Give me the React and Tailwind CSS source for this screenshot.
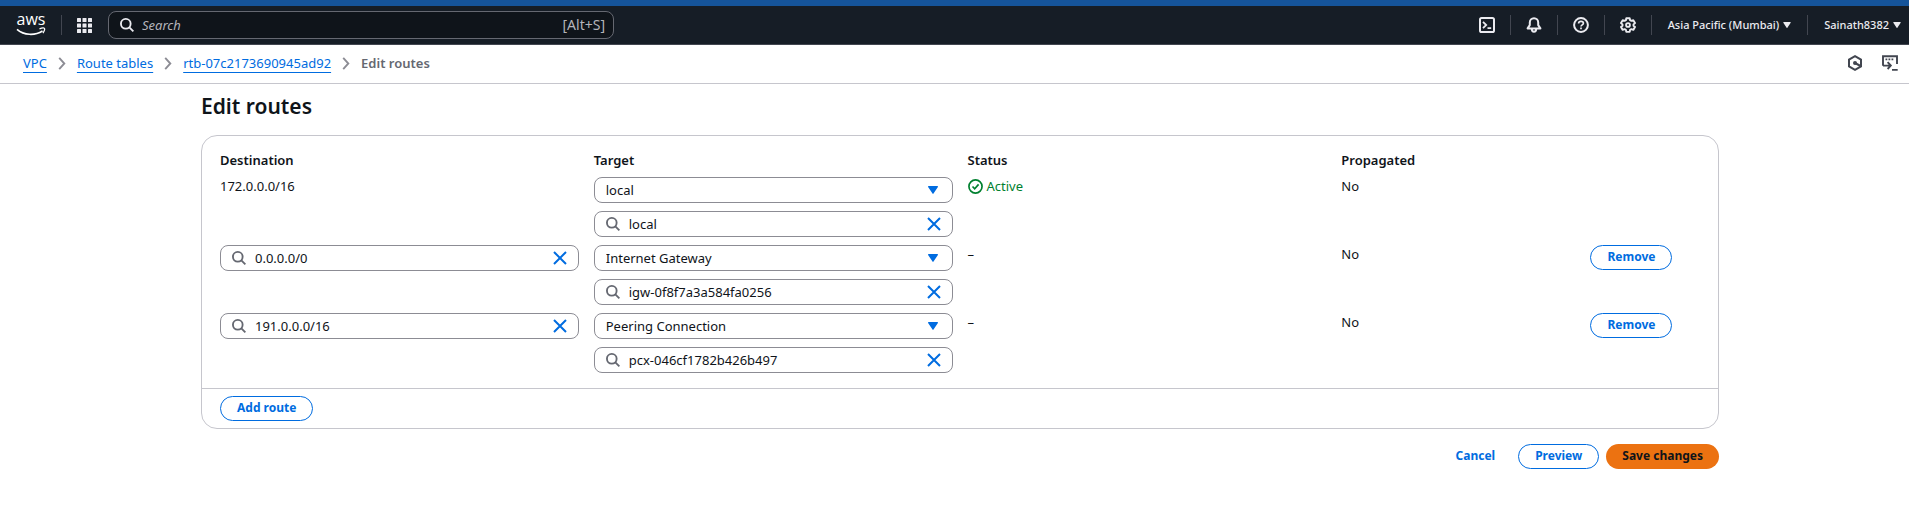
import React from "react";

const Divider = () => <span className="h-5 w-px shrink-0 bg-[#424650]" />;

const Caret = ({ className }) => (
  <svg viewBox="0 0 10 8" className={className} fill="currentColor" aria-hidden="true">
    <path d="M0.6 0h8.8c.5 0 .7.5.5.9L5.5 7.6c-.2.4-.8.4-1 0L.1.9C-.1.5.1 0 .6 0z" />
  </svg>
);

const SearchIcon = ({ className }) => (
  <svg viewBox="1 1 15 15" className={className} fill="none" stroke="currentColor" strokeWidth="2" aria-hidden="true">
    <circle cx="7.2" cy="7.2" r="5.2" />
    <path d="M11 11l4.300 4.300" />
  </svg>
);

const CloseIcon = () => (
  <svg viewBox="0 0 16 16" className="size-4" fill="none" stroke="currentColor" strokeWidth="2" aria-hidden="true">
    <path d="M2 2l12 12M14 2L2 14" />
  </svg>
);

const AwsLogo = () => (
  <a href="#home" aria-label="AWS" className="relative flex h-[28px] w-[30px] shrink-0 flex-col items-center text-white">
    <span className="font-['Open_Sans',sans-serif] text-base font-medium leading-4">aws</span>
    <svg viewBox="0 0 30 9" className="absolute bottom-[3px] left-0 h-[9px] w-[30px]" fill="none" stroke="currentColor" strokeWidth="1.6" aria-hidden="true">
      <path d="M1 2.400C8 8.600 19 8.800 26.500 4" />
      <path d="M23.500 1.800c2-.8 4.600-.9 5-.3.4.6-.2 3-1.600 4.600" strokeWidth="1.300" />
    </svg>
  </a>
);

const AppsIcon = () => (
  <svg viewBox="0 0 15 15" className="size-[15px]" fill="currentColor" aria-hidden="true">
    {[0, 5.5, 11].map((y) => [0, 5.5, 11].map((x) => <rect key={`${x}-${y}`} x={x} y={y} width="4" height="4" rx="0.5" />))}
  </svg>
);

const TerminalIcon = () => (
  <svg viewBox="0 0 16 16" className="size-4" fill="none" stroke="currentColor" strokeWidth="2" aria-hidden="true">
    <rect x="1" y="1" width="14" height="14" rx="1.6" />
    <path d="M4 4.800L7.200 8 4 11.200M8.500 11.200h3.700" strokeWidth="1.800" />
  </svg>
);

const BellIcon = () => (
  <svg viewBox="0 0 16 16" className="size-4" fill="none" stroke="currentColor" strokeWidth="2" strokeLinejoin="round" aria-hidden="true">
    <path d="M8 1.200c-2.500 0-4.200 1.900-4.200 4.300v2.600L1.600 11.400h12.800l-2.200-3.300V5.500C12.200 3.100 10.500 1.200 8 1.200z" />
    <path d="M5.800 11.800c0 1.700.9 2.900 2.200 2.900s2.200-1.200 2.200-2.900" />
  </svg>
);

const HelpIcon = () => (
  <svg viewBox="0 0 16 16" className="size-4" fill="none" stroke="currentColor" strokeWidth="2" aria-hidden="true">
    <circle cx="8" cy="8" r="6.900" />
    <path d="M5.600 6.400C5.600 5 6.600 4.300 8 4.300s2.400.8 2.400 1.900c0 1.600-2.400 1.700-2.400 3.300M8 10.600v1.700" strokeWidth="1.700" />
  </svg>
);

const GearIcon = () => (
  <svg viewBox="0 0 16 16" className="size-4" fill="none" stroke="currentColor" strokeWidth="1.900" strokeLinejoin="round" aria-hidden="true">
    <path d="M6.300 1.200h3.400l.4 2 1.300.7 1.900-.7 1.700 2.900L13.500 7.400v1.300l1.500 1.300-1.700 2.900-1.900-.7-1.300.7-.4 2H6.300l-.4-2-1.300-.7-1.900.7L1 10l1.500-1.300V7.400L1 6.100l1.700-2.900 1.900.7 1.300-.7z" />
    <circle cx="8" cy="8" r="1.900" />
  </svg>
);

const HexIcon = () => (
  <svg viewBox="0 0 16 16" className="size-4" fill="none" stroke="currentColor" strokeWidth="2" aria-hidden="true">
    <path d="M8 1.200l6 3.400v6.800l-6 3.400-6-3.400V4.600z" />
    <circle cx="8" cy="8" r="2" fill="currentColor" stroke="none" />
    <path d="M8 8l5.500 3" />
  </svg>
);

const ShellIcon = () => (
  <svg viewBox="0 0 16 16" className="size-4" fill="none" stroke="currentColor" strokeWidth="1.900" aria-hidden="true">
    <path d="M1 10.800V1.300h14V9" />
    <path d="M3.500 4.400h1.800M6.500 4.400h1.800M9.500 4.400h1.800" />
    <path d="M1 10.600h7.500M5.600 7.200l3.200 3.400-3.200 3.400M10 14.900h5.700" />
  </svg>
);

const Chevron = () => (
  <svg viewBox="0 0 8 14" className="h-[13px] w-2" fill="none" stroke="#8c8c94" strokeWidth="2" aria-hidden="true">
    <path d="M1 1l5.500 6L1 13" />
  </svg>
);

const SearchField = ({ label, value }) => (
  <div className="flex h-[26px] items-center rounded-lg border border-[#8c8c94] pl-[11px] pr-[10px]">
    <SearchIcon className="size-[14px] shrink-0 text-[#656871]" />
    <input aria-label={label} defaultValue={value} className="ml-[9px] min-w-0 flex-1 bg-transparent leading-5 outline-none" />
    <button type="button" aria-label={`Clear ${label}`} className="text-[#006ce0]">
      <CloseIcon />
    </button>
  </div>
);

const SelectField = ({ label, value }) => (
  <div className="relative">
    <select
      aria-label={label}
      defaultValue={value}
      className="block h-[26px] w-full appearance-none rounded-lg border border-[#8c8c94] bg-white pl-[11px] pr-8 leading-5 outline-none"
    >
      <option>local</option>
      <option>Internet Gateway</option>
      <option>Peering Connection</option>
    </select>
    <Caret className="pointer-events-none absolute right-[15px] top-[9px] h-2 w-[10px] text-[#006ce0]" />
  </div>
);

const OutlineButton = ({ children }) => (
  <button type="button" className="h-[25px] whitespace-nowrap rounded-full border border-[#006ce0] px-4 pb-px text-xs font-bold text-[#006ce0]">
    {children}
  </button>
);

const routes = [
  { destination: "172.0.0.0/16", type: "local", target: "local", status: "Active", fixed: true },
  { destination: "0.0.0.0/0", type: "Internet Gateway", target: "igw-0f8f7a3a584fa0256", status: "–" },
  { destination: "191.0.0.0/16", type: "Peering Connection", target: "pcx-046cf1782b426b497", status: "–" },
];

const tools = [
  ["CloudShell", TerminalIcon],
  ["Notifications", BellIcon],
  ["Help", HelpIcon],
  ["Settings", GearIcon],
];

export default function App() {
  return (
    <div className="bg-white font-['Noto_Sans',sans-serif] text-[13px] leading-5 text-[#0f141a]">
      <header className="border-t-[6px] border-[#15549a]">
        <div className="flex h-[39px] items-center border-b border-[#424650] bg-[#161d26] pl-4 pr-[7px] text-[#ebebf0]">
          <AwsLogo />
          <div className="mx-[15px] flex">
            <Divider />
          </div>
          <button type="button" aria-label="Services">
            <AppsIcon />
          </button>
          <label className="ml-4 flex h-7 w-[506px] items-center rounded-lg border border-[#656871] bg-[#0f141a] pl-[11px] pr-2">
            <SearchIcon className="size-[14px] shrink-0" />
            <input
              aria-label="Search"
              placeholder="Search"
              className="ml-2 min-w-0 flex-1 bg-transparent outline-none placeholder:italic placeholder:text-[#b4b4bb]"
            />
            <span className="text-sm text-[#b4b4bb]">[Alt+S]</span>
          </label>
          <div className="ml-auto flex items-center gap-[15px]">
            {tools.map(([name, Icon]) => (
              <React.Fragment key={name}>
                <button type="button" aria-label={name}>
                  <Icon />
                </button>
                <Divider />
              </React.Fragment>
            ))}
            <button type="button" className="flex items-center gap-1 whitespace-nowrap px-px text-[11px] font-medium">
              Asia Pacific (Mumbai)
              <Caret className="h-[6px] w-2" />
            </button>
            <Divider />
            <button type="button" className="flex items-center gap-1 whitespace-nowrap px-px text-[11px] font-medium">
              Sainath8382
              <Caret className="h-[6px] w-2" />
            </button>
          </div>
        </div>
      </header>

      <div className="flex h-[39px] items-center justify-between border-b border-[#c6c6cd] pb-[2px] pl-[23px] pr-[11px]">
        <nav aria-label="Breadcrumb" className="flex items-center gap-[11px]">
          {["VPC", "Route tables", "rtb-07c2173690945ad92"].map((name) => (
            <React.Fragment key={name}>
              <a href="#breadcrumb" className="text-[#006ce0] underline underline-offset-4">
                {name}
              </a>
              <Chevron />
            </React.Fragment>
          ))}
          <span className="font-semibold text-[#656871]">Edit routes</span>
        </nav>
        <div className="flex gap-[19px] text-[#424650]">
          <button type="button" aria-label="Resources">
            <HexIcon />
          </button>
          <button type="button" aria-label="Open shell">
            <ShellIcon />
          </button>
        </div>
      </div>

      <div className="pl-[11px]">
        <main className="mx-auto max-w-[1518px] pt-[10px]">
          <h1 className="text-[21px] font-semibold leading-6">Edit routes</h1>
          <section className="mt-[17px] rounded-2xl border border-[#c6c6cd]">
            <div className="pb-[7px] pl-[18px] pr-[3px] pt-[14px]">
              <table className="w-full table-fixed text-left">
                <thead>
                  <tr className="h-[27px] align-top">
                    <th className="w-1/4 font-semibold">Destination</th>
                    <th className="w-1/4 font-semibold">Target</th>
                    <th className="w-1/4 font-semibold">Status</th>
                    <th className="w-1/6 font-semibold">Propagated</th>
                    <th aria-label="Actions" />
                  </tr>
                </thead>
                <tbody>
                  {routes.map((r) => (
                    <tr key={r.destination} className="align-top leading-[18px]">
                      <td className="pr-[15px]">{r.fixed ? r.destination : <SearchField label="Destination" value={r.destination} />}</td>
                      <td className="pb-2 pr-[15px]">
                        <div className="flex flex-col gap-2">
                          <SelectField label="Target type" value={r.type} />
                          <SearchField label="Target" value={r.target} />
                        </div>
                      </td>
                      <td>
                        {r.fixed ? (
                          <span className="flex items-center gap-1 text-[#00802f]">
                            <svg viewBox="0 0 16 16" className="size-[15px]" fill="none" stroke="currentColor" strokeWidth="1.800" aria-hidden="true">
                              <circle cx="8" cy="8" r="7" />
                              <path d="M4.800 8l2.300 2.400 4.200-4.600" />
                            </svg>
                            {r.status}
                          </span>
                        ) : (
                          r.status
                        )}
                      </td>
                      <td>No</td>
                      <td>{!r.fixed && <OutlineButton>Remove</OutlineButton>}</td>
                    </tr>
                  ))}
                </tbody>
              </table>
            </div>
            <div className="flex border-t border-[#c6c6cd] px-[18px] py-[7px]">
              <OutlineButton>Add route</OutlineButton>
            </div>
          </section>
          <div className="mt-[15px] flex justify-end gap-[7px]">
            <button type="button" className="h-[25px] px-4 pb-px text-xs font-bold text-[#006ce0]">
              Cancel
            </button>
            <OutlineButton>Preview</OutlineButton>
            <button type="button" className="h-[25px] rounded-full bg-[#ec7211] px-4 pb-px text-xs font-bold">
              Save changes
            </button>
          </div>
        </main>
      </div>
    </div>
  );
}
